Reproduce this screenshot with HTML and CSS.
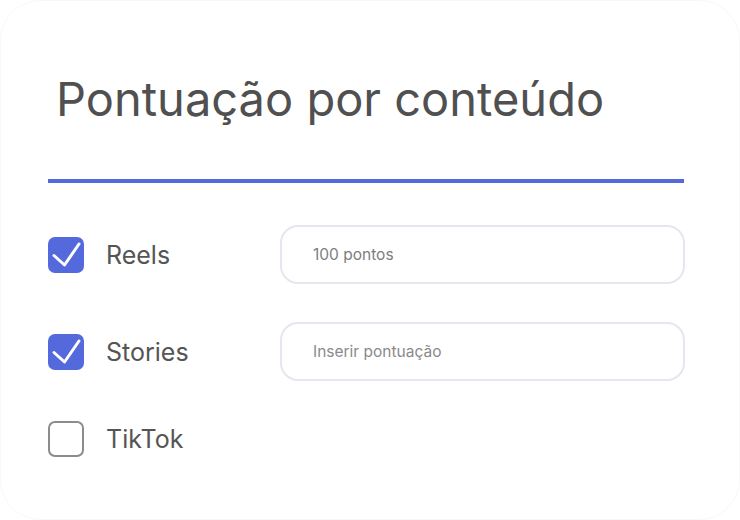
FILE: index.html
```html
<!DOCTYPE html>
<html lang="pt">
<head>
<meta charset="utf-8">
<title>Pontuação por conteúdo</title>
<link rel="stylesheet" href="styles.css">
</head>
<body>
<div class="card">
  <h1 class="title">Pontuação por conteúdo</h1>
  <div class="divider"></div>
  <div class="rows">
    <div class="row">
      <span class="check checked">
        <svg viewBox="0 0 36 36" width="36" height="36"><path d="M6 18.5 L16.5 28 L31 7" fill="none" stroke="#fff" stroke-width="3" stroke-linecap="round" stroke-linejoin="round"/></svg>
      </span>
      <span class="label">Reels</span>
      <div class="field"><span class="value">100 pontos</span></div>
    </div>
    <div class="row">
      <span class="check checked">
        <svg viewBox="0 0 36 36" width="36" height="36"><path d="M6 18.5 L16.5 28 L31 7" fill="none" stroke="#fff" stroke-width="3" stroke-linecap="round" stroke-linejoin="round"/></svg>
      </span>
      <span class="label">Stories</span>
      <div class="field"><span class="placeholder">Inserir pontuação</span></div>
    </div>
    <div class="row row-last">
      <span class="check"></span>
      <span class="label">TikTok</span>
    </div>
  </div>
</div>
</body>
</html>
```
FILE: styles.css
```css
html, body {
  margin: 0;
  padding: 0;
  background: #ffffff;
}
body {
  font-family: Inter, "Noto Sans", sans-serif;
}
.card {
  box-sizing: border-box;
  width: 740px;
  height: 520px;
  border: 1px solid #f8f8f8;
  border-radius: 40px;
  padding: 69px 54px 0 47px;
}
.title {
  margin: 0 0 0 8px;
  font-size: 47px;
  font-weight: 400;
  line-height: 57px;
  color: #505050;
  letter-spacing: 0;
}
.divider {
  margin-top: 52px;
  height: 4px;
  width: 636px;
  background: #5469db;
}
.rows {
  margin-top: 42px;
  display: flex;
  flex-direction: column;
  gap: 38px;
}
.row {
  display: flex;
  align-items: center;
}
.row-last {
  margin-top: 2px;
}
.check {
  box-sizing: border-box;
  width: 36px;
  height: 36px;
  border-radius: 7px;
  border: 2.5px solid #8c8c8c;
  flex: none;
  display: flex;
}
.check.checked {
  border: none;
  background: #5469db;
}
.label {
  width: 174px;
  padding-left: 22px;
  font-size: 25px;
  color: #555555;
}
.field {
  box-sizing: border-box;
  width: 405px;
  height: 59px;
  border: 2px solid #e4e7ef;
  border-radius: 18px;
  display: flex;
  align-items: center;
  padding-left: 31px;
  font-size: 15.5px;
}
.value {
  color: #7d7d7d;
}
.placeholder {
  color: #8a8a8a;
}
```
